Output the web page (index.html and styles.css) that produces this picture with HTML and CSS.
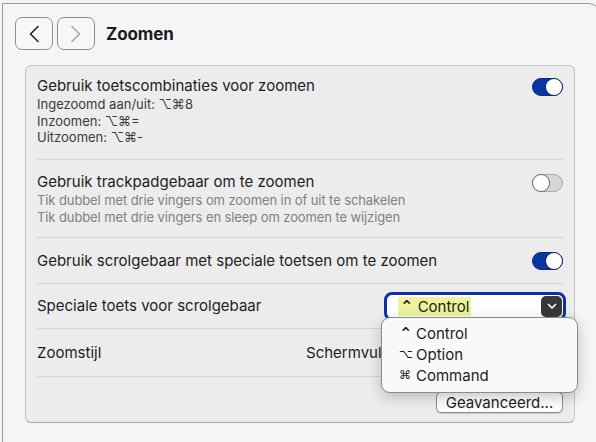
FILE: index.html
```html
<!DOCTYPE html>
<html lang="nl">
<head>
<meta charset="utf-8">
<link rel="stylesheet" href="styles.css">
</head>
<body>
<div class="window">
  <header class="toolbar">
    <div class="nav">
      <button class="navbtn"><svg width="12" height="18" viewBox="0 0 12 18"><path d="M10 1.5 L2.5 9 L10 16.5" fill="none" stroke="#222" stroke-width="1.6" stroke-linecap="round" stroke-linejoin="round"/></svg></button>
      <button class="navbtn"><svg width="12" height="18" viewBox="0 0 12 18"><path d="M2 1.5 L9.5 9 L2 16.5" fill="none" stroke="#a8a8a8" stroke-width="1.6" stroke-linecap="round" stroke-linejoin="round"/></svg></button>
    </div>
    <h1 class="title">Zoomen</h1>
  </header>

  <section class="group">
    <div class="row row-1">
      <div class="text">
        <div class="label">Gebruik toetscombinaties voor zoomen</div>
        <div class="sub dark">Ingezoomd aan/uit: ⌥⌘8</div>
        <div class="sub dark">Inzoomen: ⌥⌘=</div>
        <div class="sub dark">Uitzoomen: ⌥⌘-</div>
      </div>
      <span class="toggle on"><span class="knob"></span></span>
    </div>
    <div class="sep"></div>
    <div class="row row-2">
      <div class="text">
        <div class="label">Gebruik trackpadgebaar om te zoomen</div>
        <div class="sub">Tik dubbel met drie vingers om zoomen in of uit te schakelen</div>
        <div class="sub">Tik dubbel met drie vingers en sleep om zoomen te wijzigen</div>
      </div>
      <span class="toggle"><span class="knob"></span></span>
    </div>
    <div class="sep"></div>
    <div class="row row-3">
      <div class="label">Gebruik scrolgebaar met speciale toetsen om te zoomen</div>
      <span class="toggle on"><span class="knob"></span></span>
    </div>
    <div class="sep"></div>
    <div class="row row-4">
      <div class="label">Speciale toets voor scrolgebaar</div>
      <div class="popup">
        <span class="popup-value"><span class="kglyph caret">⌃</span> Control</span>
        <span class="popup-arrow"><svg width="10" height="7" viewBox="0 0 10 7"><path d="M1.5 1.5 L5 5 L8.5 1.5" fill="none" stroke="#fff" stroke-width="1.7" stroke-linecap="round" stroke-linejoin="round"/></svg></span>
      </div>
    </div>
    <div class="sep"></div>
    <div class="row row-5">
      <div class="label">Zoomstijl</div>
      <div class="value">Schermvullend</div>
    </div>
    <div class="sep"></div>
    <div class="row row-6">
      <button class="pushbtn">Geavanceerd...</button>
    </div>
  </section>

  <div class="menu">
    <div class="menu-item"><span class="glyph caret">⌃</span>Control</div>
    <div class="menu-item"><span class="glyph">⌥</span>Option</div>
    <div class="menu-item"><span class="glyph">⌘</span>Command</div>
  </div>
</div>
</body>
</html>
```

FILE: styles.css
```css
html, body {
  margin: 0;
  padding: 0;
  width: 596px;
  height: 442px;
  overflow: hidden;
  background: #f5f5f5;
  font-family: Inter, "Liberation Sans", "DejaVu Sans", sans-serif;
  color: #1d1d1d;
}

.window {
  position: relative;
  margin: 3px 0 0 2px;
  width: 598px;
  height: 460px;
  box-sizing: border-box;
  border-top: 1px solid #9c9c9c;
  border-left: 1px solid #9c9c9c;
  border-right: 1px solid #9c9c9c;
  border-top-right-radius: 11px;
  background: #f5f5f5;
}

.toolbar {
  display: flex;
  align-items: center;
  padding: 13px 0 0 12px;
  height: 33px;
}

.nav {
  display: flex;
  gap: 4px;
}

.navbtn {
  width: 38px;
  height: 33px;
  box-sizing: border-box;
  border: 1px solid #8e8e8e;
  border-radius: 7px;
  background: #f7f7f7;
  display: flex;
  align-items: center;
  justify-content: center;
  padding: 0;
}

.title {
  margin: 0 0 0 11px;
  font-size: 17px;
  font-weight: 700;
  letter-spacing: -0.1px;
}

.group {
  margin: 15px 0 0 22px;
  width: 550px;
  height: 358px;
  box-sizing: border-box;
  background: #ececec;
  border: 1px solid #c4c4c4;
  border-bottom-color: #a9a9a9;
  border-radius: 6px;
  display: flex;
  flex-direction: column;
}

.row {
  display: flex;
  justify-content: space-between;
  padding: 0 11px 0 11px;
  box-sizing: border-box;
}

.label {
  font-size: 15px;
  line-height: 20px;
}

.sub {
  font-size: 13px;
  line-height: 16.5px;
  color: #808080;
  letter-spacing: -0.1px;
}
.sub.dark { color: #3a3a3a; letter-spacing: 0; }

.row-1 { padding-top: 10px; height: 93px; align-items: flex-start; }
.row-2 { padding-top: 12px; height: 77px; align-items: flex-start; }
.row-3 { height: 45px; align-items: center; }
.row-4 { height: 44px; align-items: center; }
.row-5 { height: 47px; align-items: center; }
.row-6 { height: 45px; justify-content: flex-end; align-items: flex-start; padding-top: 15px; }

.row-1 .toggle { margin-top: 2px; }
.row-2 .toggle { margin-top: 2px; }

.sep {
  height: 1px;
  background: #d6d6d6;
  margin: 0 11px;
  flex: none;
}

.toggle {
  position: relative;
  width: 31px;
  height: 18px;
  box-sizing: border-box;
  border-radius: 9px;
  background: #d6d6d6;
  border: 1px solid #a8a8a8;
  flex: none;
}
.toggle.on {
  background: #0a35a3;
  border-color: #072a86;
}
.knob {
  position: absolute;
  top: 0px;
  left: 0px;
  width: 16px;
  height: 16px;
  border-radius: 50%;
  background: #fff;
  box-shadow: 0 0 0 1px #6e6e6e;
}
.toggle.on .knob { left: 13px; box-shadow: 0 0 0 0.8px #1d2a55; }

.popup {
  width: 182px;
  height: 29px;
  box-sizing: border-box;
  border: 3px solid #0b2fae;
  border-radius: 8px;
  background: #fff;
  display: flex;
  align-items: center;
  justify-content: space-between;
  padding: 0 1px 0 11px;
  margin-right: -3px;
}
.popup-value {
  font-size: 15px;
  line-height: 19px;
  background: #eef39c;
  padding: 0 2px;
}
.kglyph {
  font-family: "DejaVu Sans", sans-serif;
  font-size: 13px;
}
.kglyph.caret { font-size: 16px; font-weight: 700; }
.popup-arrow {
  width: 21px;
  height: 21px;
  border-radius: 5px;
  background: #383838;
  display: flex;
  align-items: center;
  justify-content: center;
}

.value {
  font-size: 15px;
  margin-right: 151px;
}

.pushbtn {
  font-family: inherit;
  font-size: 15px;
  color: #1d1d1d;
  width: 127px;
  height: 21px;
  box-sizing: border-box;
  border: 1px solid #8f8f8f;
  border-radius: 5px;
  background: #fdfdfd;
  padding: 0;
  line-height: 19px;
  box-shadow: 0 0.5px 1px rgba(0,0,0,0.15);
}

.menu {
  position: absolute;
  left: 378px;
  top: 313px;
  width: 197px;
  height: 76px;
  box-sizing: border-box;
  background: #f9f9f9;
  border: 1px solid #8a8a8a;
  border-radius: 9px;
  padding: 5px 0 0 17px;
  box-shadow: 0 4px 14px rgba(0,0,0,0.22);
}
.menu-item {
  font-size: 15px;
  line-height: 21px;
  display: flex;
}
.menu-item .glyph {
  width: 17px;
  flex: none;
  font-family: "DejaVu Sans", sans-serif;
  font-size: 12px;
  overflow: hidden;
}
.menu-item .glyph.caret { font-size: 16px; font-weight: 700; }
```
